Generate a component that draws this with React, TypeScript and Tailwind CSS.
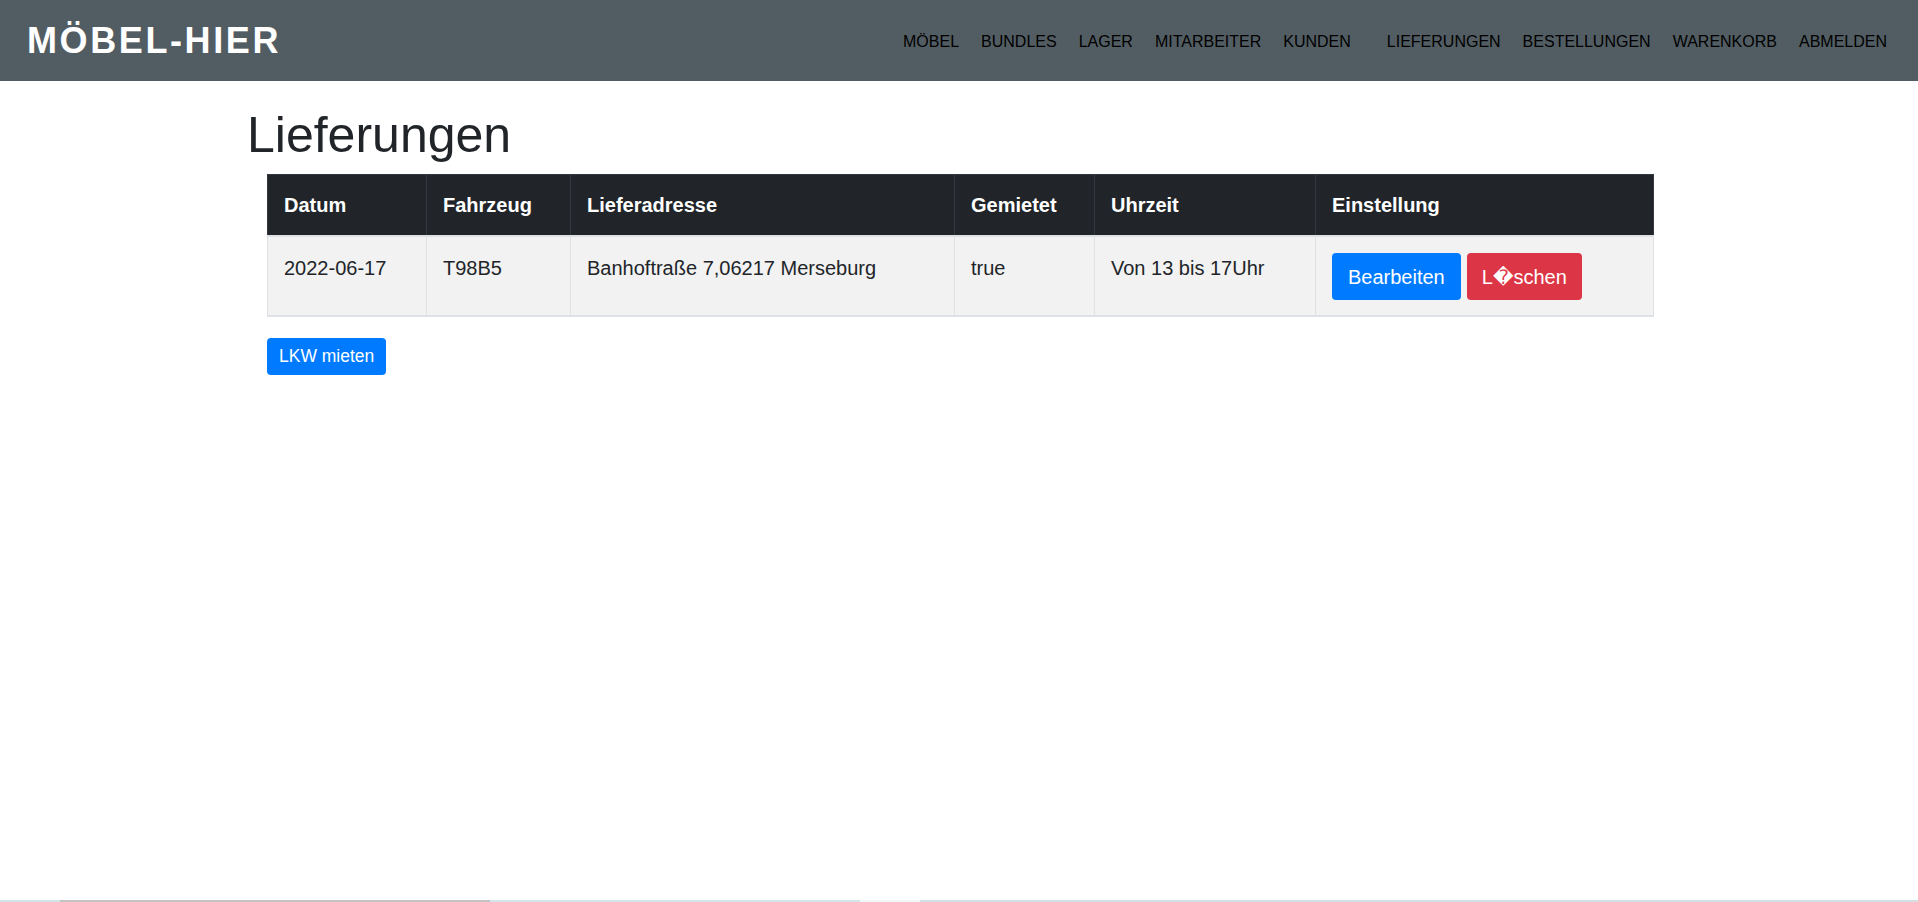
const navItems = ["Möbel", "Bundles", "Lager", "Mitarbeiter", "Kunden", "Lieferungen", "Bestellungen", "Warenkorb", "Abmelden"];

const columns = [
  { label: "Datum", width: "w-[159px]" },
  { label: "Fahrzeug", width: "w-[144px]" },
  { label: "Lieferadresse", width: "w-[384px]" },
  { label: "Gemietet", width: "w-[140px]" },
  { label: "Uhrzeit", width: "w-[221px]" },
  { label: "Einstellung", width: "w-[338px]" },
];

const deliveries = [
  { id: 1, date: "2022-06-17", vehicle: "T98B5", address: "Banhoftraße 7,06217 Merseburg", rented: "true", time: "Von 13 bis 17Uhr" },
];

function App() {
  return (
    <div className="flex min-h-screen flex-col bg-white font-['Liberation_Sans','DejaVu_Sans',Arial,sans-serif] text-[#212529]">
      <header className="flex h-[81px] items-center justify-between bg-[#525d63] pl-[27px] pr-[31px]">
        <a className="text-[36px] font-bold uppercase tracking-[2.6px] text-white">Möbel-Hier</a>
        <nav className="flex items-center gap-[22px] pt-[2px] text-[16px] uppercase text-black">
          {navItems.map((item) => (
            <a key={item} className={item === "Lieferungen" ? "ml-[14px]" : ""}>
              {item}
            </a>
          ))}
        </nav>
      </header>

      <main className="pl-[247px]">
        <h1 className="mt-[24px] mb-[9px] text-[50px] leading-[60px] font-normal">Lieferungen</h1>
        <div className="ml-[20px]">
          <table className="table-fixed border-collapse border border-[#dee2e6] text-[20px] leading-[30px]">
            <thead>
              <tr className="bg-[#212529] text-white">
                {columns.map((col) => (
                  <th
                    key={col.label}
                    className={`${col.width} h-[61px] border border-b-2 border-[#32383e] border-b-[#dee2e6] px-4 py-[15px] text-left font-bold`}
                  >
                    {col.label}
                  </th>
                ))}
              </tr>
            </thead>
            <tbody>
              {deliveries.map((d) => (
                <tr key={d.id} className="bg-[#f2f2f2]">
                  <td className="border border-b-2 border-[#dee2e6] px-4 pt-[16px] pb-[15px] align-top">{d.date}</td>
                  <td className="border border-b-2 border-[#dee2e6] px-4 pt-[16px] pb-[15px] align-top">{d.vehicle}</td>
                  <td className="border border-b-2 border-[#dee2e6] px-4 pt-[16px] pb-[15px] align-top">{d.address}</td>
                  <td className="border border-b-2 border-[#dee2e6] px-4 pt-[16px] pb-[15px] align-top">{d.rented}</td>
                  <td className="border border-b-2 border-[#dee2e6] px-4 pt-[16px] pb-[15px] align-top">{d.time}</td>
                  <td className="border border-b-2 border-[#dee2e6] px-4 pt-[16px] pb-[15px] align-top">
                    <div className="flex gap-[6px]">
                      <button className="flex h-[47px] items-center rounded-[4px] bg-[#007bff] px-4 text-white">Bearbeiten</button>
                      <button className="flex h-[47px] items-center rounded-[4px] bg-[#dc3545] px-[15px] text-white">L{"\uFFFD"}schen</button>
                    </div>
                  </td>
                </tr>
              ))}
            </tbody>
          </table>
          <button className="mt-[21px] flex h-[37px] items-center rounded-[4px] bg-[#007bff] px-3 text-[17.5px] text-white">
            LKW mieten
          </button>
        </div>
      </main>

      <div className="mt-auto flex h-[2px]">
        <div className="w-[60px] bg-[#d3e3e8]" />
        <div className="w-[430px] bg-[#c3c3c3]" />
        <div className="w-[370px] bg-[#d6e5ea]" />
        <div className="w-[60px] bg-[#f3f6f7]" />
        <div className="flex-1 bg-[#d5dfe4]" />
      </div>
    </div>
  );
}

export default App;
